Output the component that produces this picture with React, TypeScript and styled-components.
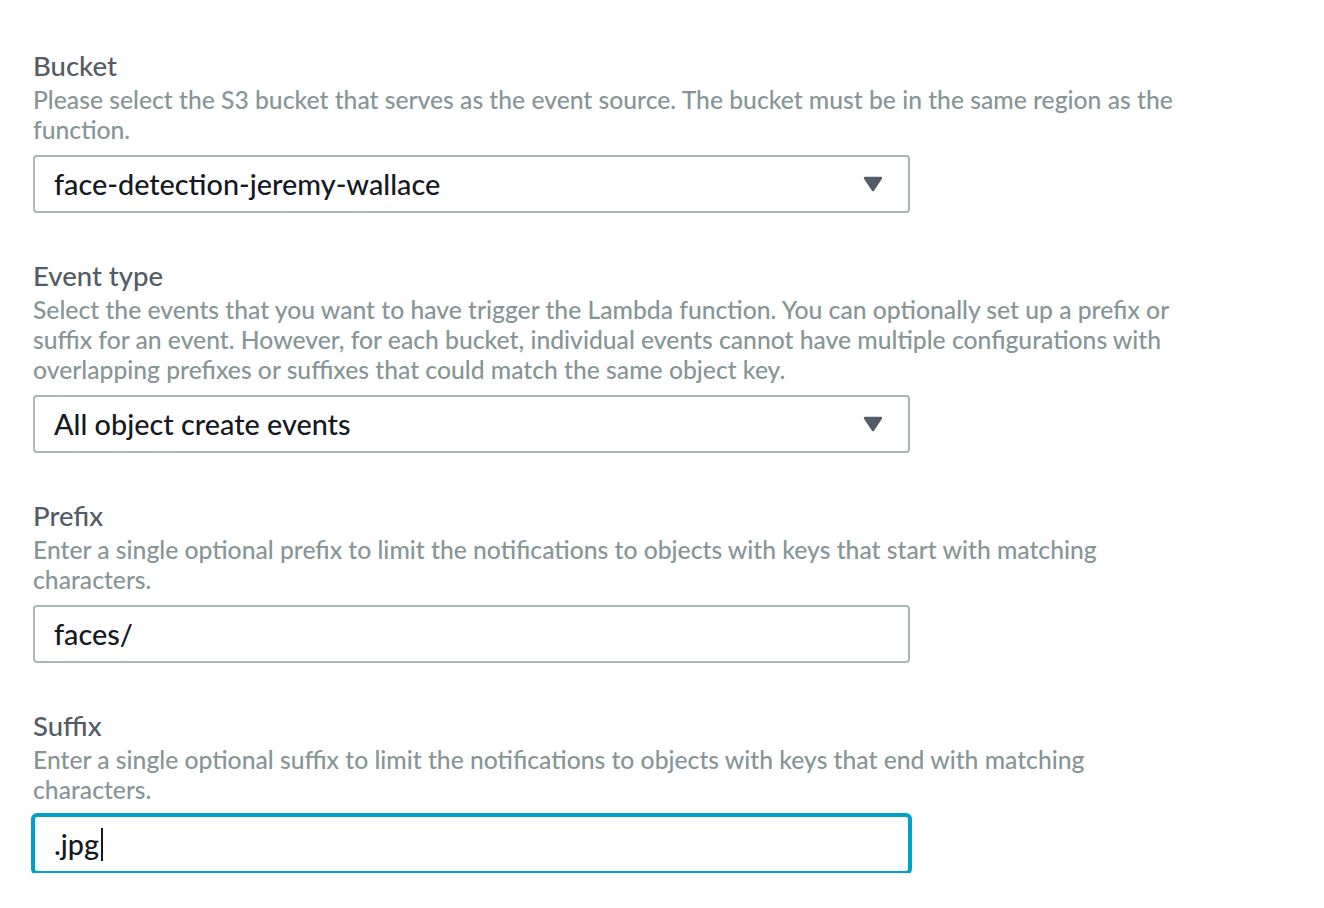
import React from "react";
import styled, { createGlobalStyle } from "styled-components";

const GlobalStyle = createGlobalStyle`
  html, body { margin: 0; padding: 0; background: #ffffff; }
  body { font-family: Lato, "Open Sans", sans-serif; -webkit-font-smoothing: antialiased; }
`;

const Page = styled.div`
  padding: 49px 0 0 33px;
`;

const Form = styled.form`
  width: 1155px;
  display: flex;
  flex-direction: column;
  gap: 46px;
`;

const Field = styled.div`
  display: flex;
  flex-direction: column;
`;

const Label = styled.label`
  font-size: 27.5px;
  line-height: 34px;
  color: #545b64;
  font-weight: 500;
`;

const Description = styled.div`
  margin: 2px 0 10px;
  font-size: 24.7px;
  line-height: 30px;
  color: #879596;
  font-weight: 500;
`;

const Control = styled.div<{ $focused?: boolean }>`
  box-sizing: border-box;
  width: 877px;
  height: 58px;
  display: flex;
  align-items: center;
  justify-content: space-between;
  padding: 0 25px 0 19px;
  border: 2px solid ${(p) => (p.$focused ? "#00a1c9" : "#aab7b8")};
  border-radius: 4px;
  box-shadow: ${(p) => (p.$focused ? "0 0 0 2px #00a1c9" : "none")};
  background: #ffffff;
  font-size: 28.8px;
  font-weight: 500;
  color: #16191f;
  cursor: ${(p) => (p.$focused ? "text" : "pointer")};
`;

const Value = styled.span`
  display: flex;
  align-items: center;
  white-space: nowrap;
`;

const Caret = styled.span`
  display: inline-block;
  width: 1.5px;
  height: 33px;
  margin-left: 2px;
  background: #16191f;
`;

const Arrow = () => (
  <svg width="20" height="16" viewBox="0 0 20 16" aria-hidden="true">
    <path d="M2 2 H18 L10 14 Z" fill="#545b64" stroke="#545b64" strokeWidth="2.4" strokeLinejoin="round" />
  </svg>
);

type FieldDef = {
  label: string;
  description: string;
  value: string;
  select?: boolean;
  focused?: boolean;
};

const fields: FieldDef[] = [
  {
    label: "Bucket",
    description:
      "Please select the S3 bucket that serves as the event source. The bucket must be in the same region as the function.",
    value: "face-detection-jeremy-wallace",
    select: true,
  },
  {
    label: "Event type",
    description:
      "Select the events that you want to have trigger the Lambda function. You can optionally set up a prefix or suffix for an event. However, for each bucket, individual events cannot have multiple configurations with overlapping prefixes or suffixes that could match the same object key.",
    value: "All object create events",
    select: true,
  },
  {
    label: "Prefix",
    description:
      "Enter a single optional prefix to limit the notifications to objects with keys that start with matching characters.",
    value: "faces/",
  },
  {
    label: "Suffix",
    description:
      "Enter a single optional suffix to limit the notifications to objects with keys that end with matching characters.",
    value: ".jpg",
    focused: true,
  },
];

export default function App() {
  return (
    <Page>
      <GlobalStyle />
      <Form onSubmit={(e) => e.preventDefault()}>
        {fields.map((f) => (
          <Field key={f.label}>
            <Label>{f.label}</Label>
            <Description>{f.description}</Description>
            <Control $focused={f.focused} role={f.select ? "combobox" : "textbox"}>
              <Value>
                {f.value}
                {f.focused && <Caret />}
              </Value>
              {f.select && <Arrow />}
            </Control>
          </Field>
        ))}
      </Form>
    </Page>
  );
}
